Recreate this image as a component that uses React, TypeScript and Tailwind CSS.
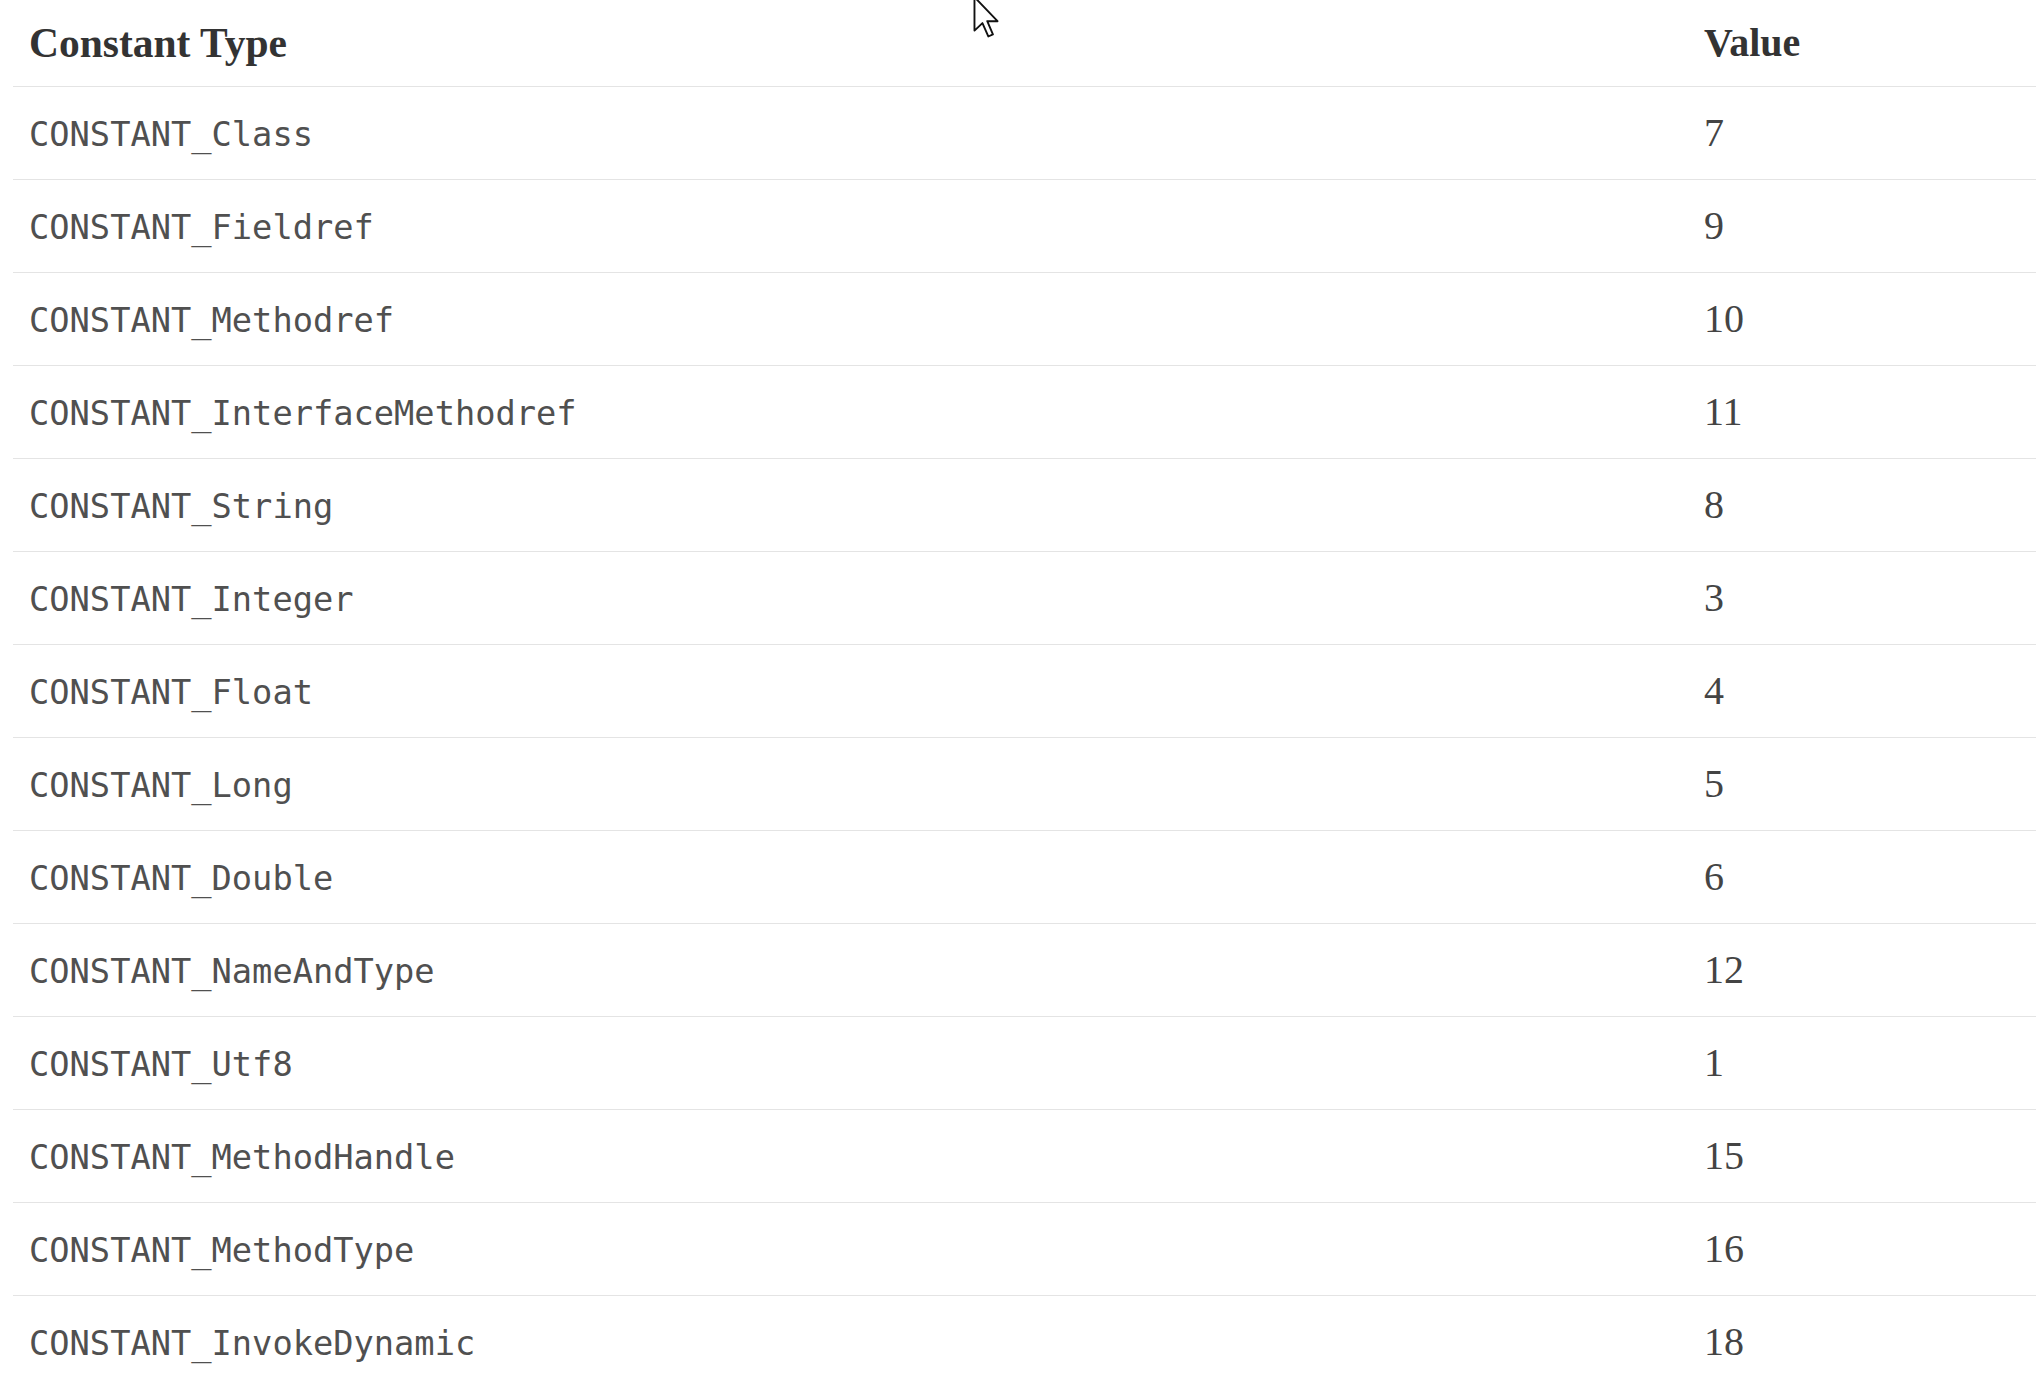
const rows: [string, string][] = [
  ['CONSTANT_Class', '7'],
  ['CONSTANT_Fieldref', '9'],
  ['CONSTANT_Methodref', '10'],
  ['CONSTANT_InterfaceMethodref', '11'],
  ['CONSTANT_String', '8'],
  ['CONSTANT_Integer', '3'],
  ['CONSTANT_Float', '4'],
  ['CONSTANT_Long', '5'],
  ['CONSTANT_Double', '6'],
  ['CONSTANT_NameAndType', '12'],
  ['CONSTANT_Utf8', '1'],
  ['CONSTANT_MethodHandle', '15'],
  ['CONSTANT_MethodType', '16'],
  ['CONSTANT_InvokeDynamic', '18'],
]

function Cursor() {
  return (
    <svg
      className="absolute left-[972px] top-[-5px]"
      width="28"
      height="44"
      viewBox="0 0 13 21"
    >
      <path
        d="M1 1 L1 17 L4.8 13.4 L7.6 19.8 L9.8 18.8 L7.1 12.5 L12 12.5 Z"
        fill="#fff"
        stroke="#111"
        strokeWidth="0.9"
        strokeLinejoin="round"
      />
    </svg>
  )
}

export default function App() {
  return (
    <div className="relative h-[1398px] w-full overflow-hidden bg-white">
      <div className="ml-[13px]">
        <div className="grid h-[87px] grid-cols-[1675px_1fr] items-center border-b border-[#e4e4e4] font-['Liberation_Serif',serif] font-bold text-[#333333]">
          <div className="pl-4 text-[41.5px]">Constant Type</div>
          <div className="pl-4 text-[40px]">Value</div>
        </div>
        {rows.map(([name, value], i) => (
          <div
            key={name}
            className={
              i === rows.length - 1
                ? 'grid h-[92px] grid-cols-[1675px_1fr] items-center'
                : 'grid h-[93px] grid-cols-[1675px_1fr] items-center border-b border-[#e4e4e4]'
            }
          >
            <div className="pl-4 pt-[5px] font-['DejaVu_Sans_Mono',monospace] text-[33.7px] text-[#505050]">
              {name}
            </div>
            <div className="pl-4 font-['Liberation_Serif',serif] text-[40px] text-[#444444]">
              {value}
            </div>
          </div>
        ))}
      </div>
      <Cursor />
    </div>
  )
}
